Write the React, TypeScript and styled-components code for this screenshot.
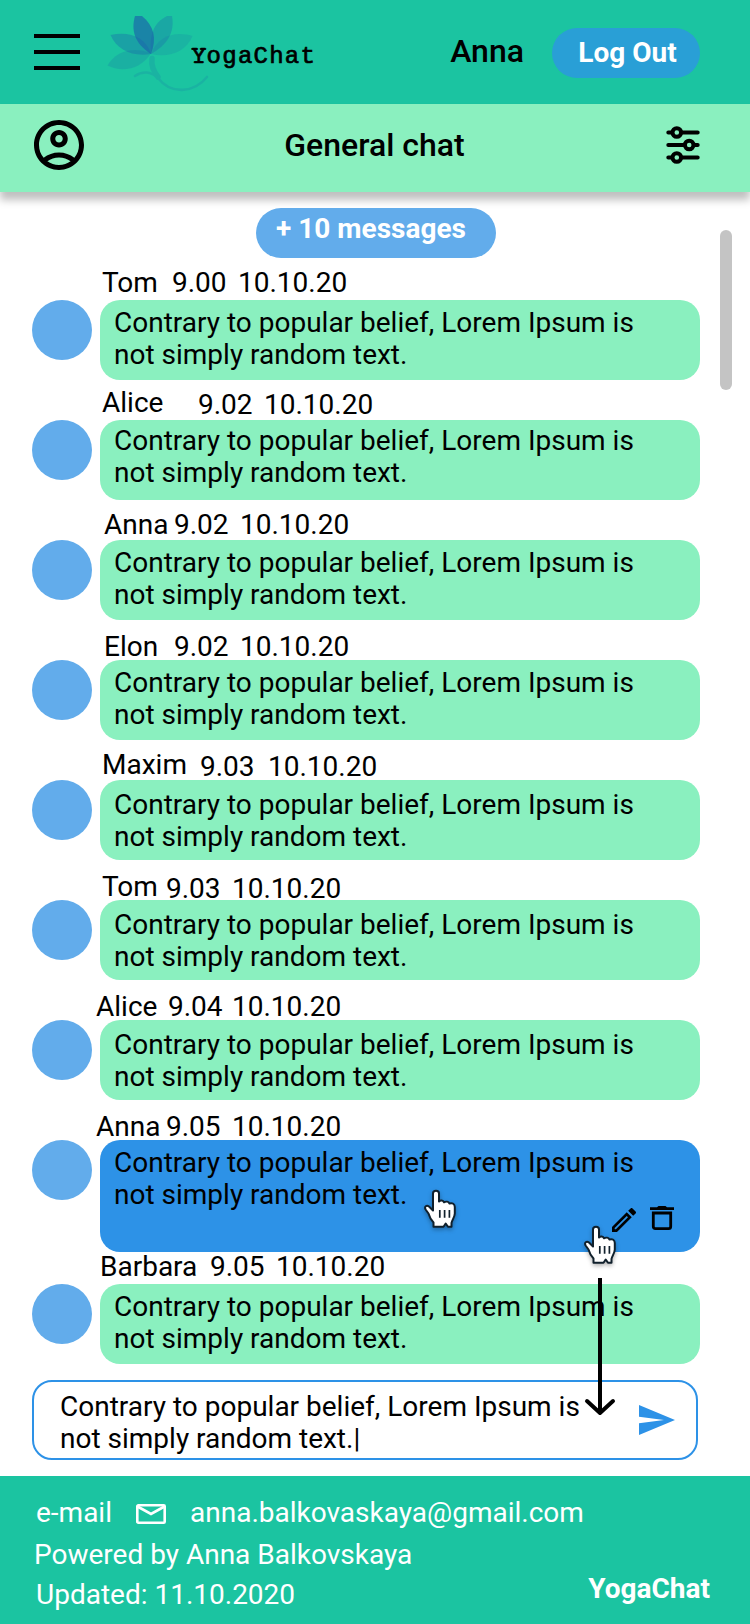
import React from 'react';
import styled, { createGlobalStyle } from 'styled-components';

const GlobalStyle = createGlobalStyle`
  * { box-sizing: border-box; }
  body { margin: 0; background: #fff; color: #000; font: 400 28px/32px Roboto, sans-serif; }
  button { border: 0; padding: 0; background: none; font: inherit; color: inherit; display: block; }
  svg { display: block; }
`;

const Page = styled.div`
  position: relative;
  display: flex;
  flex-direction: column;
  width: 750px;
  height: 1624px;
  overflow: hidden;
`;

const Header = styled.header`
  display: flex;
  align-items: center;
  height: 104px;
  flex: none;
  padding: 0 50px 0 34px;
  background: #1bc4a1;
`;

const MenuButton = styled.button`
  display: flex;
  flex-direction: column;
  gap: 12px;
  width: 46px;
`;

const MenuLine = styled.span`
  height: 4px;
  background: #000;
`;

const Brand = styled.div`
  display: flex;
  align-items: center;
  margin-left: 27px;
  height: 104px;
`;

const BrandName = styled.span`
  margin-left: -36px;
  padding-top: 11px;
  font: 400 24px/32px "Liberation Mono", monospace;
  letter-spacing: 1.25px;
  -webkit-text-stroke: 0.7px #000;

  &::first-letter {
    font-family: "Courier Prime", "Liberation Mono", monospace;
    font-size: 26px;
    letter-spacing: 0;
  }
`;

const UserName = styled.span`
  margin-left: auto;
  padding-bottom: 2px;
  font-size: 32px;
  font-weight: 500;
`;

const LogoutButton = styled.button`
  width: 148px;
  height: 50px;
  margin: 2px 0 0 28px;
  padding: 0 0 1px 3px;
  border-radius: 25px;
  background: #299fd6;
  color: #fff;
  font-weight: 700;
`;

const SubHeader = styled.div`
  display: flex;
  align-items: center;
  justify-content: space-between;
  flex: none;
  height: 88px;
  padding: 0 50px 6px 34px;
  background: #8af0bf;
  box-shadow: 0 8px 8px rgba(0, 0, 0, 0.25);
`;

const Title = styled.h1`
  margin: 0 1px 0 0;
  font-size: 32px;
  font-weight: 500;
`;

const Chat = styled.main`
  display: flex;
  flex-direction: column;
  flex: none;
  height: 1284px;
  padding: 16px 50px 0 32px;

  > * { flex-shrink: 0; }
`;

const MoreButton = styled.button`
  align-self: flex-start;
  width: 240px;
  height: 50px;
  margin: 0 0 2px 224px;
  padding: 0 10px 8px 0;
  border-radius: 25px;
  background: #62aceb;
  color: #fff;
  font-weight: 700;
`;

const Meta = styled.div<{ $x: number; $time: number; $date: number; $y: number; $h: number }>`
  display: grid;
  grid-template-columns: ${p => p.$time - p.$x}px ${p => p.$date - p.$time}px auto;
  align-items: start;
  height: ${p => p.$h}px;
  padding-left: ${p => p.$x - 32}px;
  white-space: nowrap;

  > span { margin-top: ${p => p.$y}px; }
`;

const Author = styled.b<{ $y: number }>`
  margin-top: ${p => p.$y}px;
  font-weight: 400;
`;

const MessageRow = styled.div`
  display: flex;
  gap: 8px;
`;

const Avatar = styled.div`
  width: 60px;
  height: 60px;
  border-radius: 50%;
  background: #62aceb;
`;

const Bubble = styled.div<{ $selected?: boolean; $pad: number }>`
  display: flex;
  flex-direction: column;
  justify-content: space-between;
  width: 600px;
  height: ${p => (p.$selected ? 112 : 80)}px;
  padding: ${p => p.$pad}px 14px 0;
  border-radius: 20px;
  background: ${p => (p.$selected ? '#2d92e7' : '#8af0bf')};
`;

const Actions = styled.div`
  display: flex;
  justify-content: flex-end;
  align-items: flex-start;
  flex: none;
  gap: 14px;
  height: 46px;
  margin-top: -8px;
  padding-right: 12px;
`;

const EditIcon = styled.svg`
  margin-top: 2px;
`;

const Composer = styled.form`
  display: flex;
  justify-content: space-between;
  width: 666px;
  height: 80px;
  margin-top: 16px;
  padding: 9px 21px 0 26px;
  border: 2px solid #2d92e7;
  border-radius: 20px;
`;

const SendButton = styled.button`
  height: 30px;
  margin-top: 14px;
`;

const ScrollThumb = styled.div`
  position: absolute;
  left: 720px;
  top: 230px;
  width: 12px;
  height: 160px;
  border-radius: 6px;
  background: #c4c4c4;
`;

const Pointer = styled.svg<{ $x: number; $y: number }>`
  position: absolute;
  left: ${p => p.$x}px;
  top: ${p => p.$y}px;
  filter: drop-shadow(0 2px 2px rgba(0, 0, 0, 0.3));
`;

const FlowArrow = styled.svg`
  position: absolute;
  left: 584px;
  top: 1278px;
`;

const Footer = styled.footer`
  display: flex;
  justify-content: space-between;
  flex: 1;
  padding: 20px 40px 0 34px;
  background: #1bc4a1;
  color: #fff;
`;

const FooterInfo = styled.div`
  display: flex;
  flex-direction: column;
  gap: 8px;
`;

const FooterLine = styled.div<{ $indent?: number; $drop?: number }>`
  display: flex;
  align-items: center;
  height: 33px;
  padding: ${p => p.$drop || 0}px 0 0 ${p => p.$indent || 0}px;
`;

const MailIcon = styled.svg`
  margin: 2px 24px 0 24px;
`;

const FooterBrand = styled.strong`
  margin-top: 77px;
  font-weight: 700;
`;

type Message = {
  author: string; time: string; x: number; tx: number; dx: number;
  ny: number; ty: number; pad: number; h?: number; selected?: boolean;
};

const messages: Message[] = [
  { author: 'Tom', time: '9.00', x: 102, tx: 172, dx: 238, ny: 7, ty: 7, pad: 7 },
  { author: 'Alice', time: '9.02', x: 102, tx: 198, dx: 264, ny: 7, ty: 9, pad: 5 },
  { author: 'Anna', time: '9.02', x: 104, tx: 174, dx: 240, ny: 9, ty: 9, pad: 7 },
  { author: 'Elon', time: '9.02', x: 104, tx: 174, dx: 240, ny: 11, ty: 11, pad: 7 },
  { author: 'Maxim', time: '9.03', x: 102, tx: 200, dx: 268, ny: 9, ty: 11, pad: 9 },
  { author: 'Tom', time: '9.03', x: 102, tx: 166, dx: 232, ny: 11, ty: 13, pad: 9 },
  { author: 'Alice', time: '9.04', x: 96, tx: 168, dx: 232, ny: 11, ty: 11, pad: 9 },
  { author: 'Anna', time: '9.05', x: 96, tx: 166, dx: 232, ny: 11, ty: 11, pad: 7, selected: true },
  { author: 'Barbara', time: '9.05', x: 100, tx: 210, dx: 276, ny: -1, ty: -1, pad: 7, h: 32 },
];

const LoremText = () => (
  <span>
    Contrary to popular belief, Lorem Ipsum is
    <br />
    not simply random text.
  </span>
);

const Lotus = () => (
  <svg width="120" height="80" viewBox="107 12 120 80">
    <g fill="#1a62ab">
      <path opacity=".2" d="M151 53C132 46 115 52 107.500 65.500C122 73 142 69 151 53Z" />
      <path opacity=".17" d="M151 54C158 35 176 31 192.500 36C186 52 169 58 151 54Z" />
      <path opacity=".35" d="M151 54C146 36 128 31 110.500 35C117 50 132 57 151 54Z" />
      <path opacity=".3" d="M151 54C149 36 153 23 167 16H172C175 33 167 45 151 54Z" />
      <path opacity=".65" d="M151 54C134 43 131 30 135 16H142C154 26 157 38 151 54Z" />
    </g>
    <g fill="none" stroke="#1a62ab" opacity=".17" strokeLinecap="round">
      <path strokeWidth="5.500" d="M152 58.500C151 66 154 72 158 77" />
      <path strokeWidth="2.600" d="M135 76C142 71 151 71 158 78C171 95 194 93 207 77" />
    </g>
  </svg>
);

const Hand = ({ x, y }: { x: number; y: number }) => (
  <Pointer $x={x} $y={y} width="34" height="40" viewBox="0 0 34 40">
    <path
      d="M10.500 37.800V33.500C8 31 6.500 28 5.500 24.500L2.600 20.500C1 17.500 3.600 15.600 6 17.500L10 21.500V4.500C10 0.800 16 0.800 16 4.500V12.500C17.500 11 20 11.300 21 13.300C23 12.300 25.500 12.700 26.500 14.500C29.500 13.500 31.800 15 31.800 18V24.500C31.800 28 29 31 28.500 34V37.800H25L22.700 34.500L20.500 37.800Z"
      fill="#fff" stroke="#10202c" strokeWidth="2" strokeLinejoin="round"
    />
    <path d="M16.800 21V28.800M21.600 21V28.800M26.400 21V28.800" stroke="#10202c" strokeWidth="1.700" />
  </Pointer>
);

export default function App() {
  return (
    <Page>
      <GlobalStyle />
      <Header>
        <MenuButton aria-label="Menu"><MenuLine /><MenuLine /><MenuLine /></MenuButton>
        <Brand>
          <Lotus />
          <BrandName>YogaChat</BrandName>
        </Brand>
        <UserName>Anna</UserName>
        <LogoutButton>Log Out</LogoutButton>
      </Header>
      <SubHeader>
        <svg width="50" height="50" viewBox="2 2 20 20">
          <path d="M12 2C6.480 2 2 6.480 2 12s4.480 10 10 10 10-4.480 10-10S17.520 2 12 2zM7.350 18.500C8.660 17.560 10.260 17 12 17s3.340.560 4.650 1.500C15.340 19.440 13.740 20 12 20s-3.340-.560-4.650-1.500zm10.790-1.380C16.450 15.800 14.320 15 12 15s-4.450.8-6.140 2.120C4.700 15.730 4 13.950 4 12c0-4.420 3.580-8 8-8s8 3.580 8 8c0 1.950-.7 3.730-1.860 5.120zM12 6c-1.930 0-3.500 1.570-3.500 3.500S10.070 13 12 13s3.500-1.570 3.500-3.500S13.930 6 12 6zm0 5c-.83 0-1.500-.67-1.500-1.500S11.170 8 12 8s1.500.67 1.500 1.500S12.830 11 12 11z" />
        </svg>
        <Title>General chat</Title>
        <svg width="34" height="38" viewBox="0 0 34 38" fill="none" stroke="#000" strokeWidth="4" strokeLinecap="round">
          <path d="M2.300 6.500H6M16 6.500H31.700M2.300 19H18M28 19H31.700M2.300 31.500H6M16 31.500H31.700" />
          <circle cx="10.800" cy="6.500" r="4.300" />
          <circle cx="23.200" cy="19" r="4.300" />
          <circle cx="10.800" cy="31.500" r="4.300" />
        </svg>
      </SubHeader>
      <Chat>
        <MoreButton>+ 10 messages</MoreButton>
        {messages.map((m, i) => (
          <React.Fragment key={i}>
            <Meta $x={m.x} $time={m.tx} $date={m.dx} $y={m.ty} $h={m.h ?? 40}>
              <Author $y={m.ny}>{m.author}</Author>
              <span>{m.time}</span>
              <span>10.10.20</span>
            </Meta>
            <MessageRow>
              <Avatar />
              <Bubble $selected={m.selected} $pad={m.pad}>
                <LoremText />
                {m.selected && (
                  <Actions>
                    <EditIcon width="24" height="24" viewBox="3 3 18 18">
                      <path d="M14.060 9.020l.92.920L5.920 19H5v-.92l9.060-9.060M17.660 3c-.25 0-.51.100-.7.290l-1.830 1.830 3.750 3.750 1.830-1.830c.39-.39.39-1.020 0-1.410l-2.340-2.340c-.2-.2-.45-.29-.71-.29zm-3.600 3.190L3 17.250V21h3.750L17.810 9.940l-3.750-3.750z" />
                    </EditIcon>
                    <svg width="24" height="24" viewBox="0 0 24 24">
                      <path d="M0 1.300H7L8.500 0H15.500L17 1.300H24V4H0Z" />
                      <path d="M3.300 7H20.700V20.500Q20.700 22.600 18.600 22.600H5.400Q3.300 22.600 3.300 20.500Z" fill="none" stroke="#000" strokeWidth="2.800" />
                    </svg>
                  </Actions>
                )}
              </Bubble>
            </MessageRow>
          </React.Fragment>
        ))}
        <Composer>
          <div>
            Contrary to popular belief, Lorem Ipsum is
            <br />
            not simply random text.|
          </div>
          <SendButton type="button" aria-label="Send">
            <svg width="36" height="30" viewBox="0 0 36 30" fill="#2d92e7">
              <path d="M0 0L36 15L0 30V18.300L25 15L0 11.700Z" />
            </svg>
          </SendButton>
        </Composer>
      </Chat>
      <Footer>
        <FooterInfo>
          <FooterLine $indent={2}>
            e-mail
            <MailIcon width="30" height="20" viewBox="0 0 30 20" fill="none" stroke="#fff" strokeWidth="2.600">
              <rect x="1.300" y="1.300" width="27.400" height="17.400" rx="1" />
              <path d="M1.500 2.500L15 10L28.500 2.500" />
            </MailIcon>
            anna.balkovaskaya@gmail.com
          </FooterLine>
          <FooterLine $drop={2}>Powered by Anna Balkovskaya</FooterLine>
          <FooterLine $indent={2}>Updated: 11.10.2020</FooterLine>
        </FooterInfo>
        <FooterBrand>YogaChat</FooterBrand>
      </Footer>
      <ScrollThumb />
      <Hand x={423} y={1189} />
      <Hand x={583} y={1225} />
      <FlowArrow width="32" height="140" viewBox="0 0 32 140" fill="none" stroke="#000" strokeWidth="4">
        <path d="M16 0V135" />
        <path d="M3 123L16 135L29 123" strokeLinecap="round" strokeLinejoin="round" />
      </FlowArrow>
    </Page>
  );
}
